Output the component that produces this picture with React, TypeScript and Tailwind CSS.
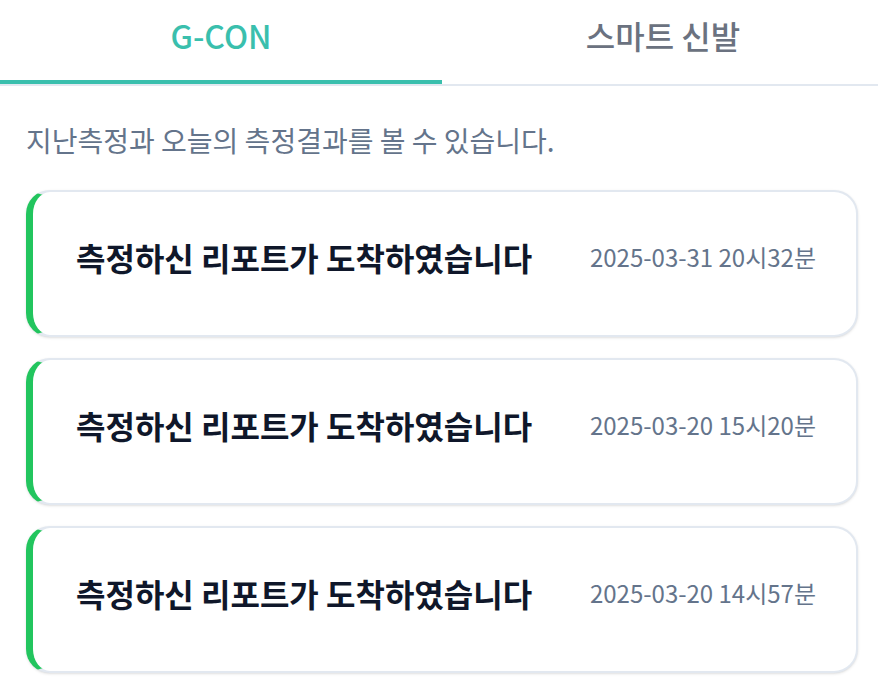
import React, { useState } from "react";

const reports = [
  { title: "측정하신 리포트가 도착하였습니다", date: "2025-03-31 20시32분" },
  { title: "측정하신 리포트가 도착하였습니다", date: "2025-03-20 15시20분" },
  { title: "측정하신 리포트가 도착하였습니다", date: "2025-03-20 14시57분" },
];

export default function App() {
  const [tab, setTab] = useState(0);

  return (
    <div className="min-h-screen w-full overflow-hidden bg-white font-['Noto_Sans_CJK_KR',sans-serif]">
      <div className="w-[884px]">
        <div className="flex border-b-2 border-[#e2e8f0]">
          {["G-CON", "스마트 신발"].map((label, i) => (
            <button
              key={label}
              onClick={() => setTab(i)}
              className={
                tab === i
                  ? "flex-1 h-[84px] border-b-4 border-[#3abfad] text-[32px] font-medium text-[#3abfad]"
                  : "flex-1 h-[84px] border-b-4 border-transparent text-[32px] font-medium text-[#6b7280]"
              }
            >
              <span className="relative -top-[5px]">{label}</span>
            </button>
          ))}
        </div>

        <div className="px-[26px] pt-[40px]">
          <p className="text-[28px] text-[#64748b] leading-none">
            지난측정과 오늘의 측정결과를 볼 수 있습니다.
          </p>

          <div className="mt-[36px] flex flex-col gap-[21px]">
            {reports.map((r, i) => (
              <div
                key={i}
                className="flex h-[147px] items-center justify-between rounded-[24px] border-2 border-l-[7px] border-[#e2e8f0] border-l-[#22c55e] bg-white pb-[14px] pl-[43px] pr-[40px] shadow-sm"
              >
                <span className="text-[32px] font-bold text-[#0f172a]">{r.title}</span>
                <span className="text-[24px] text-[#64748b]">{r.date}</span>
              </div>
            ))}
          </div>
        </div>
      </div>
    </div>
  );
}
